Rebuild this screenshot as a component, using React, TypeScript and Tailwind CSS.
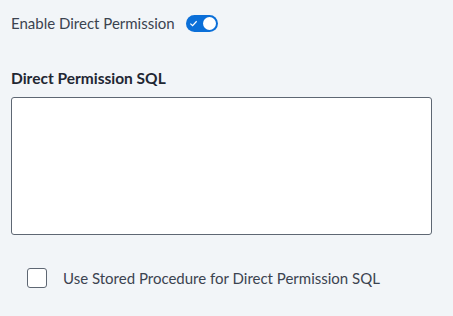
import React, { useState } from 'react';

const App: React.FC = () => {
  const [enabled, setEnabled] = useState(true);
  const [useProc, setUseProc] = useState(false);
  const [sql, setSql] = useState('');

  return (
    <div className="w-[453px] h-[316px] bg-[#f2f5f8] px-[11px] pt-[12px] text-[#3b4350] font-['Lato','Open_Sans',sans-serif]">
      <div className="flex items-center h-[22px]">
        <span className="text-[15px]">Enable Direct Permission</span>
        <button
          onClick={() => setEnabled(!enabled)}
          className={`ml-[11px] w-[32px] h-[17px] rounded-full flex items-center px-[2px] ${
            enabled ? 'bg-[#0b6fd8] justify-end' : 'bg-gray-300 justify-start'
          }`}
        >
          {enabled && (
            <svg width="9" height="9" viewBox="0 0 10 10" className="mr-[5px]">
              <path d="M1.5 5.2 L4 7.5 L8.5 2.5" fill="none" stroke="#fff" strokeWidth="1.3" />
            </svg>
          )}
          <span className="w-[13px] h-[13px] rounded-full bg-white" />
        </button>
      </div>

      <h2 className="mt-[33px] text-[15.5px] font-bold text-[#1f2733] leading-[22px]">Direct Permission SQL</h2>

      <textarea
        value={sql}
        onChange={(e) => setSql(e.target.value)}
        className="mt-[8px] block w-[421px] h-[138px] bg-white border border-[#5e6773] rounded-[3px] resize-none outline-none p-2"
      />

      <label className="mt-[32px] ml-[16px] flex items-center">
        <input
          type="checkbox"
          checked={useProc}
          onChange={() => setUseProc(!useProc)}
          className="appearance-none w-[20px] h-[20px] bg-white border border-[#5e6773] rounded-[3px]"
        />
        <span className="ml-[16px] text-[15px]">Use Stored Procedure for Direct Permission SQL</span>
      </label>
    </div>
  );
};

export default App;
